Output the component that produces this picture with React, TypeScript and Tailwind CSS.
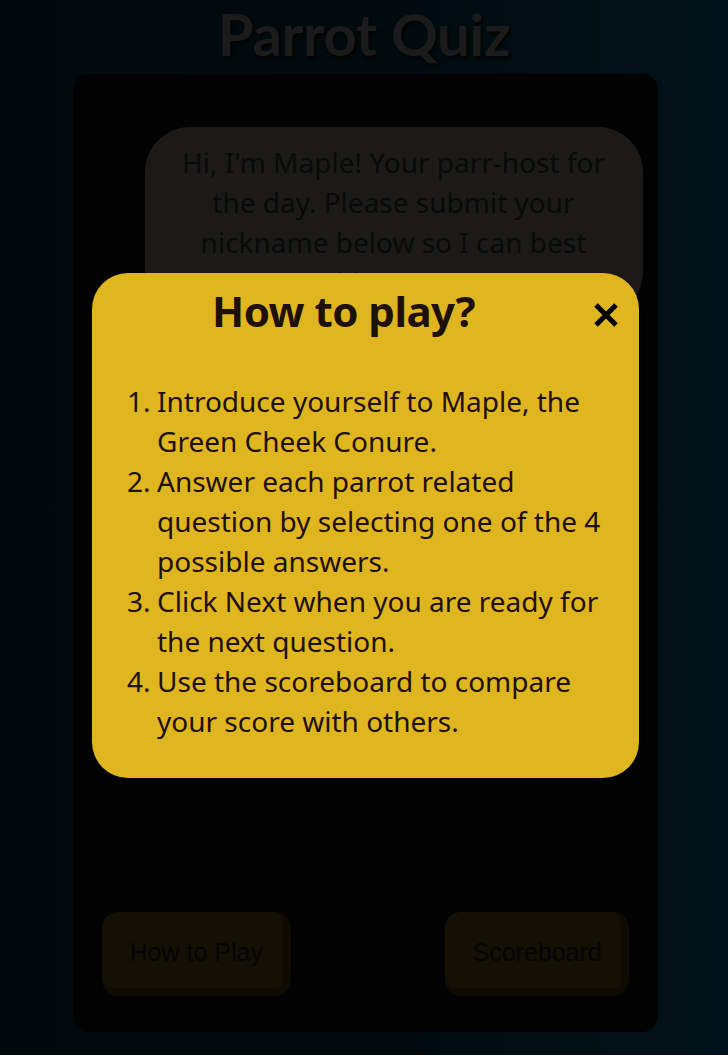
import React from "react";

export default function App() {
  const steps = [
    "Introduce yourself to Maple, the Green Cheek Conure.",
    "Answer each parrot related question by selecting one of the 4 possible answers.",
    "Click Next when you are ready for the next question.",
    "Use the scoreboard to compare your score with others.",
  ];
  return (
    <div
      className="relative min-h-screen w-full bg-[linear-gradient(90deg,#01090c_0%,#010a0d_50%,#02121a_100%)] flex flex-col items-center overflow-hidden"
      style={{ fontFamily: "'Noto Sans', Lato, sans-serif" }}
    >
      <h1
        className="mt-[2px] text-[58px] leading-[64px] font-bold text-[#1b1b1b] [text-shadow:2px_3px_2px_#050505] tracking-[-0.3px]"
        style={{ fontFamily: "Lato, 'Noto Sans', sans-serif" }}
      >
        Parrot Quiz
      </h1>
      <div className="mt-[8px] ml-[2px] w-[585px] h-[958px] bg-[#020202] rounded-[16px] flex flex-col">
        <div className="ml-[72px] mr-[15px] mt-[53px] h-[190px] bg-[#1b1a18] rounded-[45px] px-[22px] pt-[15px] text-center text-[28px] leading-[40px] text-[#0a0a0a]">
          Hi, I'm Maple! Your parr-host for the day. Please submit your nickname below so I can best address you.
        </div>
        <div className="flex-1" />
        <div className="flex justify-between px-[29px] mb-[36px]">
          <button
            className="w-[189px] h-[84px] rounded-[16px] bg-[#141005] border-r-[8px] border-b-[8px] border-[#0e0b03] pl-[28px] pr-[10px] pt-[6px] text-[25px] text-[#050505] text-left whitespace-nowrap"
            style={{ fontFamily: "'Liberation Sans', Arial, sans-serif" }}
          >
            How to Play
          </button>
          <button
            className="w-[184px] h-[84px] rounded-[16px] bg-[#141005] border-r-[8px] border-b-[8px] border-[#0e0b03] pl-[28px] pr-[10px] pt-[6px] text-[25px] text-[#050505] text-left whitespace-nowrap"
            style={{ fontFamily: "'Liberation Sans', Arial, sans-serif" }}
          >
            Scoreboard
          </button>
        </div>
      </div>

      <div className="absolute left-[92px] top-[273px] w-[547px] h-[505px] bg-[#dfb620] rounded-[36px] text-[#1e1003]">
        <div className="relative h-[80px] flex items-center justify-center pr-[44px]">
          <h2 className="text-[42px] font-bold leading-none mt-[-4px] tracking-[-0.5px]">How to play?</h2>
          <svg
            className="absolute left-[501px] top-[29px]"
            width="26"
            height="26"
            viewBox="0 0 26 26"
          >
            <path d="M3 3 L23 23 M23 3 L3 23" stroke="#000" strokeWidth="5" strokeLinecap="butt" />
          </svg>
        </div>
        <ol className="mt-[28px] pl-[35px] pr-[22px] text-[28px] leading-[40px]">
          {steps.map((s, i) => (
            <li key={i} className="flex">
              <span className="w-[30px] shrink-0">{i + 1}.</span>
              <span>{s}</span>
            </li>
          ))}
        </ol>
      </div>
    </div>
  );
}
